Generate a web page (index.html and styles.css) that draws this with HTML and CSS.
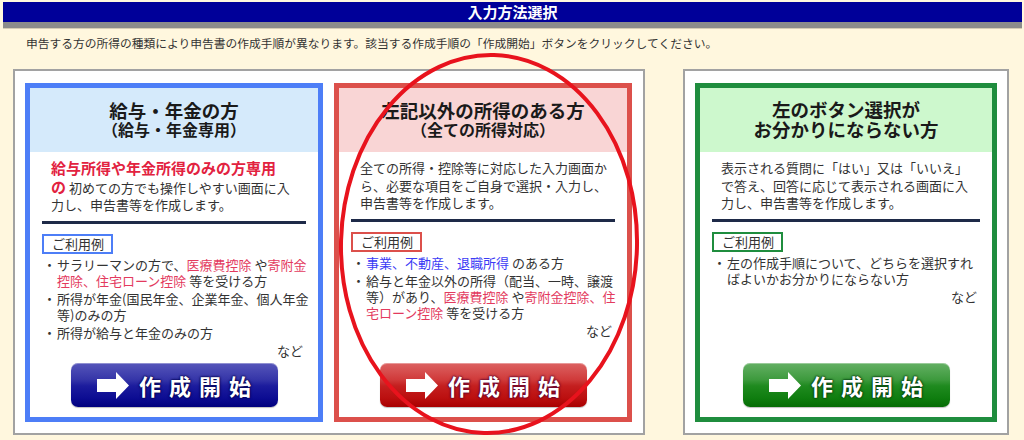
FILE: index.html
```html
<!DOCTYPE html>
<html lang="ja">
<head>
<meta charset="utf-8">
<title>入力方法選択</title>
<link rel="stylesheet" href="styles.css">
</head>
<body>
<div class="topbar">
  <div class="titlebar">入力方法選択</div>
  <div class="shade"></div>
</div>
<p class="lead">申告する方の所得の種類により申告書の作成手順が異なります。該当する作成手順の「作成開始」ボタンをクリックしてください。</p>
<div class="panels">
  <div class="panel panel-main">
    <div class="card card-blue">
      <div class="card-head">
        <div class="t1">給与・年金の方</div>
        <div class="t2">（給与・年金専用）</div>
      </div>
      <p class="desc"><strong class="em">給与所得や年金所得のみの方専用<br>の</strong> 初めての方でも操作しやすい画面に入<br>力し、申告書等を作成します。</p>
      <hr class="sep">
      <div class="tag">ご利用例</div>
      <ul class="examples">
        <li>サラリーマンの方で、<span class="red">医療費控除</span>や<span class="red">寄附金<br>控除、住宅ローン控除</span>等を受ける方</li>
        <li>所得が年金(国民年金、企業年金、個人年金<br>等)のみの方</li>
        <li>所得が給与と年金のみの方</li>
      </ul>
      <div class="etc">など</div>
      <a class="btn btn-blue" href="#">
        <svg class="arrow" width="32" height="27" viewBox="0 0 32 27"><path d="M0 7H19V0L32 13.5L19 27V20H0Z" fill="#fff"/></svg>
        <span class="btn-label">作成開始</span>
      </a>
    </div>
    <div class="card card-red">
      <div class="card-head">
        <div class="t1">左記以外の所得のある方</div>
        <div class="t2">（全ての所得対応）</div>
      </div>
      <p class="desc">全ての所得・控除等に対応した入力画面か<br>ら、必要な項目をご自身で選択・入力し、<br>申告書等を作成します。</p>
      <hr class="sep">
      <div class="tag">ご利用例</div>
      <ul class="examples">
        <li><span class="blue">事業、不動産、退職所得</span>のある方</li>
        <li>給与と年金以外の所得（配当、一時、譲渡<br>等）があり、<span class="red">医療費控除</span>や<span class="red">寄附金控除、住<br>宅ローン控除</span>等を受ける方</li>
      </ul>
      <div class="etc">など</div>
      <a class="btn btn-red" href="#">
        <svg class="arrow" width="32" height="27" viewBox="0 0 32 27"><path d="M0 7H19V0L32 13.5L19 27V20H0Z" fill="#fff"/></svg>
        <span class="btn-label">作成開始</span>
      </a>
    </div>
  </div>
  <div class="panel panel-side">
    <div class="card card-green">
      <div class="card-head">
        <div class="t1">左のボタン選択が</div>
        <div class="t1">お分かりにならない方</div>
      </div>
      <p class="desc">表示される質問に「はい」又は「いいえ」<br>で答え、回答に応じて表示される画面に入<br>力し、申告書等を作成します。</p>
      <hr class="sep">
      <div class="tag">ご利用例</div>
      <ul class="examples">
        <li>左の作成手順について、どちらを選択すれ<br>ばよいかお分かりにならない方</li>
      </ul>
      <div class="etc">など</div>
      <a class="btn btn-green" href="#">
        <svg class="arrow" width="32" height="27" viewBox="0 0 32 27"><path d="M0 7H19V0L32 13.5L19 27V20H0Z" fill="#fff"/></svg>
        <span class="btn-label">作成開始</span>
      </a>
    </div>
  </div>
</div>
<svg class="mark" width="1024" height="440" viewBox="0 0 1024 440">
  <ellipse cx="489" cy="244" rx="148" ry="189" transform="rotate(1.5 489 244)" fill="none" stroke="#e8131d" stroke-width="4"/>
</svg>
</body>
</html>
```
FILE: styles.css
```css
html, body {
  margin: 0;
  padding: 0;
}
body {
  position: relative;
  width: 1024px;
  height: 440px;
  overflow: hidden;
  background: #fff7de;
  font-family: "Noto Sans CJK JP", "Noto Sans", sans-serif;
  color: #2a2a2a;
}
.topbar {
  margin: 2px 2px 0 3px;
}
.titlebar {
  height: 20px;
  line-height: 20px;
  background: #000099;
  color: #fff;
  font-size: 15px;
  font-weight: bold;
  text-align: center;
}
.shade {
  height: 6px;
  background: #8c8c8c;
  border-bottom: 1px solid #d6cdb6;
}
.lead {
  margin: 6px 0 0 0;
  padding-left: 26px;
  font-size: 11.75px;
  line-height: 16px;
  color: #333;
  white-space: nowrap;
}
.panels {
  display: flex;
  gap: 38px;
  margin-top: 18px;
  padding-left: 13px;
}
.panel {
  box-sizing: border-box;
  height: 366px;
  background: #fff;
  border: 2px solid #a2a2a2;
  display: flex;
}
.panel-main {
  width: 632px;
  padding: 12px 11px 11px 10px;
  gap: 11px;
}
.panel-side {
  width: 326px;
  padding: 12px 10px 11px 10px;
}
.card {
  flex: 1;
  display: flex;
  flex-direction: column;
  border: 5px solid;
  background: #fff;
  min-width: 0;
}
.card-blue { border-color: #4d7ef7; }
.card-red { border-color: #dc504b; }
.card-green { border-color: #1f8d3e; }
.card-head {
  height: 64px;
  display: flex;
  flex-direction: column;
  align-items: center;
  justify-content: center;
  padding-bottom: 2px;
  box-sizing: border-box;
  color: #1a1a1a;
  font-weight: bold;
}
.card-blue .card-head { background: #d5eafb; }
.card-red .card-head { background: #f9d5d5; }
.card-green .card-head { background: #cdf8cd; }
.t1 {
  font-size: 18.5px;
  line-height: 20px;
}
.t2 {
  font-size: 16px;
  line-height: 19px;
}
.desc {
  margin: 0;
  padding: 7px 8px 0 21px;
  font-size: 13px;
  line-height: 17.5px;
  white-space: nowrap;
  color: #333;
}
.em {
  color: #e2223f;
  font-size: 15px;
  font-weight: bold;
}
.sep {
  border: 0;
  height: 3px;
  background: #1e2a48;
  margin: 7px 12px 0 12px;
}
.tag {
  align-self: flex-start;
  box-sizing: border-box;
  height: 20px;
  margin: 10px 0 0 12px;
  padding: 0 7px 0 8px;
  border: 2px solid;
  font-size: 13px;
  line-height: 16px;
  color: #333;
}
.card-blue .tag { border-color: #4d7ef7; }
.card-red .tag { border-color: #dc504b; }
.card-green .tag { border-color: #1f8d3e; }
.examples {
  list-style: none;
  margin: 3px 0 0 12px;
  padding: 0;
  font-size: 13px;
  line-height: 16px;
  white-space: nowrap;
  color: #333;
}
.examples li {
  padding-left: 15px;
  margin-bottom: 2px;
}
.examples li::before {
  content: "・";
  display: inline-block;
  width: 15px;
  margin-left: -15px;
  text-align: center;
}
.red {
  color: #e33a5e;
  margin-right: 3px;
}
.blue {
  color: #3b3bf5;
  margin-right: 3px;
}
.etc {
  text-align: right;
  padding-right: 15px;
  font-size: 13px;
  line-height: 16px;
  color: #333;
}
.btn {
  margin: auto auto 10px auto;
  width: 207px;
  height: 44px;
  border-radius: 7px;
  display: flex;
  align-items: center;
  justify-content: center;
  gap: 10px;
  text-decoration: none;
  box-shadow: inset 0 1px 0 rgba(255,255,255,0.35), 0 1px 1px rgba(0,0,0,0.25);
}
.btn-blue {
  background: linear-gradient(to bottom, #5656ba 0%, #3535a8 38%, #1c1c9d 52%, #0c0c92 80%, #00007e 100%);
}
.btn-red {
  background: linear-gradient(to bottom, #dc6262 0%, #d03a3a 38%, #c41f1f 52%, #bb0f0f 80%, #a80000 100%);
}
.btn-green {
  background: linear-gradient(to bottom, #64b064 0%, #3d9a3d 38%, #1f8a1f 52%, #0f7d0f 80%, #056c05 100%);
}
.arrow {
  flex: none;
}
.btn-label {
  font-size: 22px;
  line-height: 26px;
  font-weight: bold;
  letter-spacing: 8px;
  margin-right: -8px;
  color: #fff;
}
.btn-blue .btn-label { text-shadow: 0 0 3px #000050, 0 0 2px #000050, 0 0 1px #000050; }
.btn-red .btn-label { text-shadow: 0 0 3px #5a0030, 0 0 2px #5a0030, 0 0 1px #5a0030; }
.btn-green .btn-label { text-shadow: 0 0 3px #003a10, 0 0 2px #003a10, 0 0 1px #003a10; }
.mark {
  position: absolute;
  top: 0;
  left: 0;
  pointer-events: none;
}
```
